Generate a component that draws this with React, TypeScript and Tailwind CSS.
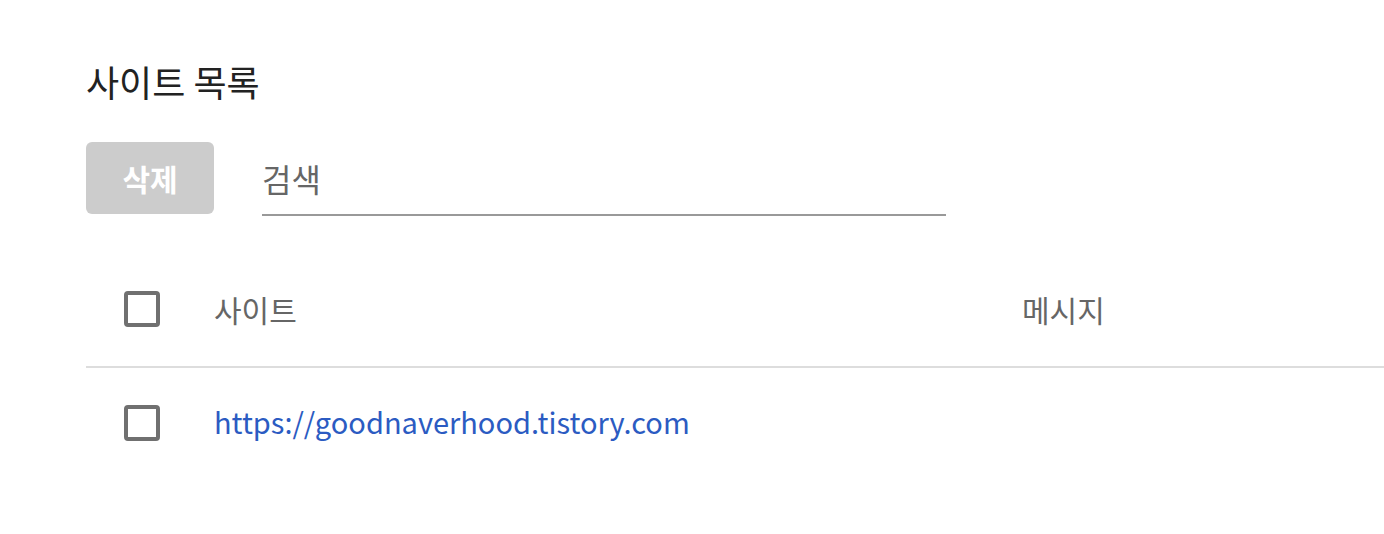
import React, { useState } from 'react';

const font = { fontFamily: '"Noto Sans CJK KR", "Noto Sans", sans-serif' };

const Checkbox: React.FC<{ checked: boolean; onChange: () => void }> = ({ checked, onChange }) => (
  <button
    type="button"
    onClick={onChange}
    className="w-[36px] h-[36px] rounded-[4px] border-[4px] border-[#707070] bg-white flex items-center justify-center"
  >
    {checked && <span className="block w-[16px] h-[16px] bg-[#707070]" />}
  </button>
);

export default function App() {
  const sites = ['https://goodnaverhood.tistory.com'];
  const [selected, setSelected] = useState<boolean[]>(sites.map(() => false));
  const [query, setQuery] = useState('');
  const all = selected.length > 0 && selected.every(Boolean);

  return (
    <div className="min-h-screen bg-white pl-[86px] pt-[56px] text-[#222]" style={font}>
      <h1 className="text-[36px] leading-[50px] font-normal text-[#222]">사이트 목록</h1>

      <div className="mt-[36px] flex items-start gap-[48px]">
        <button
          type="button"
          disabled={!selected.some(Boolean)}
          className="w-[128px] h-[72px] rounded-[6px] bg-[#cccccc] text-white text-[30px] font-bold"
        >
          삭제
        </button>
        <input
          value={query}
          onChange={(e) => setQuery(e.target.value)}
          placeholder="검색"
          className="w-[684px] h-[74px] border-b-2 border-[#999] bg-transparent text-[32px] text-[#444] placeholder-[#666] outline-none"
        />
      </div>

      <div className="mt-[52px]">
        <div className="flex items-center h-[100px] pb-[16px] border-b-2 border-[#dddddd]">
          <div className="w-[128px] pl-[38px] flex items-center">
            <Checkbox checked={all} onChange={() => setSelected(selected.map(() => !all))} />
          </div>
          <div className="w-[808px] text-[30px] text-[#666]">사이트</div>
          <div className="text-[30px] text-[#666]">메시지</div>
        </div>
        {sites.map((s, i) => (
          <div key={s} className="flex items-center h-[110px]">
            <div className="w-[128px] pl-[38px] flex items-center">
              <Checkbox
                checked={selected[i]}
                onChange={() => setSelected(selected.map((v, j) => (j === i ? !v : v)))}
              />
            </div>
            <a href="#" className="w-[808px] text-[29px] leading-[36px] pb-[4px] text-[#2b5bc2]">
              {s}
            </a>
            <div className="text-[30px] text-[#666]"></div>
          </div>
        ))}
      </div>
    </div>
  );
}
